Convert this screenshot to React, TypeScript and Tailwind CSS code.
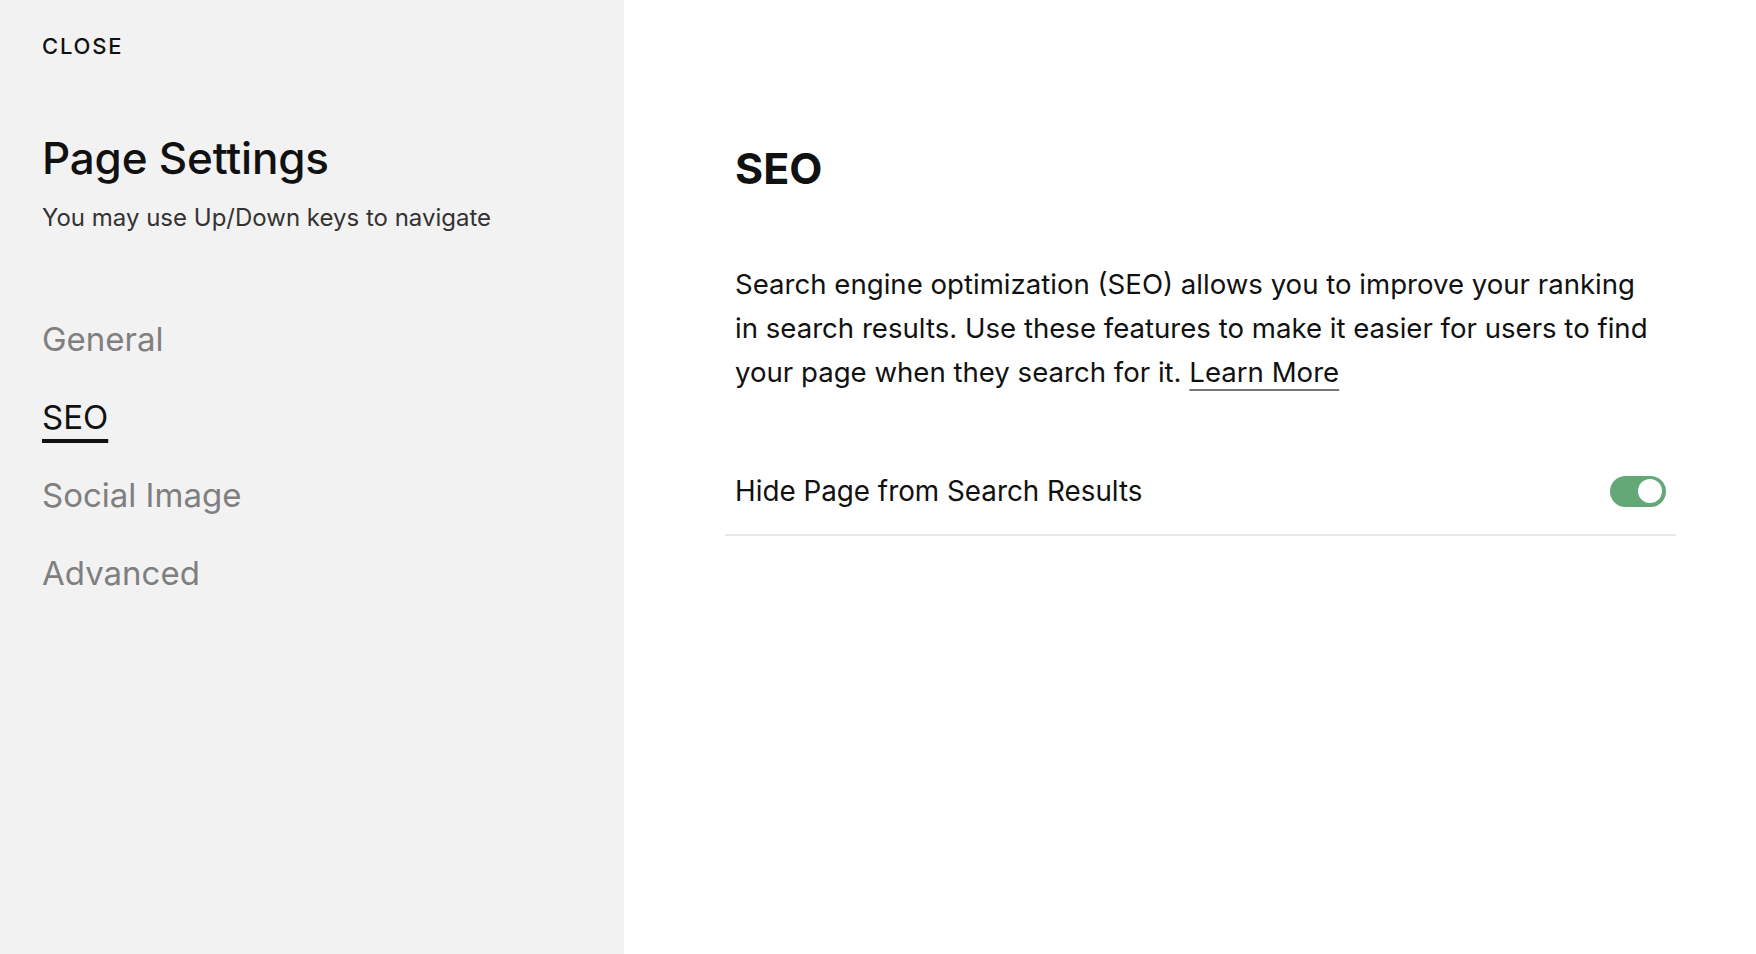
import React, { useState } from "react";

const navItems = ["General", "SEO", "Social Image", "Advanced"];

export default function App() {
  const [active, setActive] = useState("SEO");
  const [hidden, setHidden] = useState(true);

  return (
    <div
      className="flex h-[954px] w-full bg-white text-[#111111]"
      style={{ fontFamily: "Inter, 'Liberation Sans', sans-serif" }}
    >
      {/* sidebar */}
      <aside className="flex w-[624px] shrink-0 flex-col bg-[#f2f2f2] pl-[42px] pt-[33px]">
        <button
          type="button"
          className="self-start text-[22px] font-medium leading-[26px] tracking-[1.8px]"
        >
          CLOSE
        </button>

        <h1 className="mt-[74px] text-[44px] font-medium leading-[50px] tracking-[-0.2px]">
          Page Settings
        </h1>
        <p className="mt-[20px] text-[24px] leading-[30px] text-[#333333]">
          You may use Up/Down keys to navigate
        </p>

        <nav className="mt-[86px] flex flex-col gap-[38px]">
          {navItems.map((item) => (
            <button
              key={item}
              type="button"
              onClick={() => setActive(item)}
              className={`self-start text-[33px] leading-[40px] ${
                active === item
                  ? "text-[#111111] underline decoration-[4px] underline-offset-[10px]"
                  : "text-[#7f7f7f]"
              }`}
            >
              {item}
            </button>
          ))}
        </nav>
      </aside>

      {/* content */}
      <main className="flex-1 pl-[101px] pt-[143px]">
        <h2 className="pl-[10px] text-[43px] font-bold leading-[50px]">SEO</h2>

        <p className="mt-[69px] max-w-[970px] pl-[10px] pr-[10px] text-[27.6px] leading-[44px]">
          Search engine optimization (SEO) allows you to improve your ranking
          <br />
          in search results. Use these features to make it easier for users to
          find
          <br />
          your page when they search for it.{" "}
          <a
            href="#"
            className="underline decoration-[#777777] decoration-2 underline-offset-[7px]"
          >
            Learn More
          </a>
        </p>

        <div className="mt-[54px] flex h-[88px] w-[951px] items-center justify-between border-b-2 border-[#e8e8e8] px-[10px]">
          <span className="text-[27.8px] leading-[36px]">
            Hide Page from Search Results
          </span>
          <button
            type="button"
            onClick={() => setHidden(!hidden)}
            className={`flex h-[31px] w-[56px] items-center rounded-full px-[4px] ${
              hidden ? "justify-end bg-[#64a877]" : "justify-start bg-[#cfcfcf]"
            }`}
          >
            <span className="h-[24px] w-[24px] rounded-full bg-white" />
          </button>
        </div>
      </main>
    </div>
  );
}
